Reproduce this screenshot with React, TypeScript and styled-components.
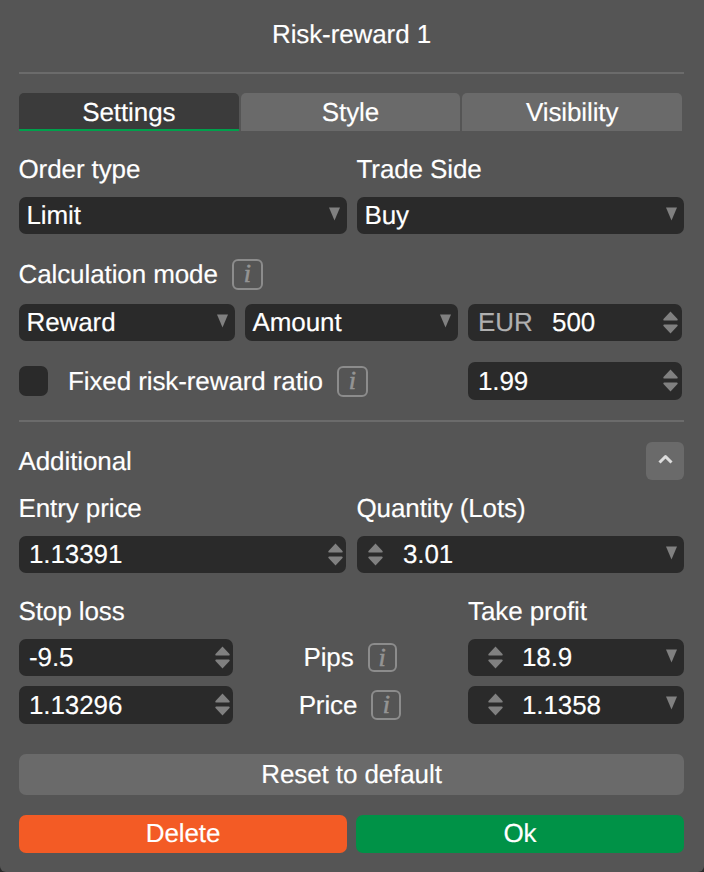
import styled, { createGlobalStyle } from 'styled-components';

const GlobalStyle = createGlobalStyle`
  html, body {
    margin: 0;
    padding: 0;
    background: #2b2b2b;
  }
  * {
    box-sizing: border-box;
  }
`;

const Panel = styled.div`
  width: 704px;
  height: 872px;
  padding: 0 20px 0 19px;
  background: #555555;
  border-radius: 0 0 6px 6px;
  color: #ffffff;
  font-family: 'Liberation Sans', Arial, sans-serif;
  font-size: 26px;
  letter-spacing: -0.1px;
  text-rendering: geometricPrecision;
  -webkit-text-stroke: 0.15px currentColor;
  overflow: hidden;
`;

const Title = styled.div`
  height: 72px;
  padding-bottom: 4px;
  display: flex;
  align-items: center;
  justify-content: center;
`;

const Divider = styled.div<{ $top?: number; $bottom: number }>`
  height: 2px;
  background: #6b6b6b;
  margin-top: ${(props) => props.$top ?? 0}px;
  margin-bottom: ${(props) => props.$bottom}px;
`;

const Tabs = styled.div`
  display: flex;
  gap: 2px;
  width: 663px;
  height: 38px;
`;

const Tab = styled.div<{ $active?: boolean }>`
  flex: 1;
  display: flex;
  align-items: center;
  justify-content: center;
  border-radius: 5px 5px 0 0;
  background: ${(props) => (props.$active ? '#3b3b3b' : '#6a6a6a')};
  box-shadow: ${(props) => (props.$active ? 'inset 0 -2px 0 #00a04c' : 'none')};
`;

const Columns = styled.div`
  display: grid;
  grid-template-columns: 328px 327px;
  column-gap: 10px;
`;

const Label = styled.div<{ $height: number; $pad?: number }>`
  height: ${(props) => props.$height}px;
  padding-top: ${(props) => props.$pad ?? 0}px;
  margin-left: -0.5px;
  display: flex;
  align-items: center;
  gap: 14px;
`;

const Field = styled.div<{ $width?: number; $height?: number; $push?: boolean }>`
  width: ${(props) => (props.$width ? `${props.$width}px` : 'auto')};
  height: ${(props) => props.$height ?? 37}px;
  margin-left: ${(props) => (props.$push ? 'auto' : '0')};
  border-radius: 7px;
  background: #2a2a2a;
  display: flex;
  align-items: center;
  position: relative;
  padding-left: 7.5px;
  flex-shrink: 0;
`;

const Value = styled.span<{ $left?: number }>`
  margin-left: ${(props) => props.$left ?? 0}px;
`;

const Unit = styled.span`
  color: #b0b0b0;
  margin-right: 19.5px;
  margin-left: 2.5px;
`;

const Caret = styled.svg`
  position: absolute;
  right: 7px;
  top: 10px;
  width: 11px;
  height: 14px;
`;

const Stepper = styled.svg<{ $left?: number; $right?: number }>`
  position: absolute;
  ${(props) => (props.$left ? `left: ${props.$left}px;` : `right: ${props.$right ?? 3}px;`)}
  top: 7px;
  width: 15px;
  height: 23px;
`;

const Row = styled.div<{ $height?: number; $top?: number }>`
  display: flex;
  align-items: center;
  gap: 10px;
  height: ${(props) => props.$height ?? 37}px;
  margin-top: ${(props) => props.$top ?? 0}px;
`;

const FixedRow = styled(Row)`
  gap: 0;
  padding-right: 2px;
`;

const InfoBox = styled.span<{ $size: number }>`
  width: ${(props) => props.$size}px;
  height: ${(props) => props.$size}px;
  flex-shrink: 0;
  border: 2px solid #8c8c8c;
  border-radius: 6px;
  display: flex;
  align-items: center;
  justify-content: center;
  color: #949494;
  font-family: 'Liberation Serif', 'Times New Roman', serif;
  font-style: italic;
  font-size: 26px;
  letter-spacing: 0;
  -webkit-text-stroke: 0.6px #949494;
`;

const CheckBox = styled.span`
  width: 29px;
  height: 30px;
  border-radius: 7px;
  background: #2a2a2a;
  margin-right: 20px;
  flex-shrink: 0;
`;

const FixedLabel = styled.span`
  margin-right: 14px;
`;

const Collapse = styled.div`
  width: 38px;
  height: 38px;
  padding-bottom: 4px;
  border-radius: 6px;
  background: #6a6a6a;
  margin-left: auto;
  display: flex;
  align-items: center;
  justify-content: center;
`;

const StopHeader = styled.div`
  display: flex;
  justify-content: space-between;
`;

const TakeProfitLabel = styled(Label)`
  width: 216px;
`;

const StopGrid = styled.div`
  display: grid;
  grid-template-columns: 214px 235px 216px;
  row-gap: 10px;
`;

const CenterCell = styled.div`
  display: flex;
  align-items: center;
  justify-content: center;
  gap: 14px;
  padding-right: 1px;
`;

const ResetButton = styled.div`
  height: 41px;
  margin-top: 30px;
  border-radius: 7px;
  background: #6a6a6a;
  display: flex;
  align-items: center;
  justify-content: center;
`;

const ActionRow = styled.div`
  display: grid;
  grid-template-columns: 328px 328px;
  column-gap: 9px;
  margin-top: 20px;
`;

const ActionButton = styled.div<{ $color: string }>`
  height: 38px;
  padding-bottom: 1px;
  border-radius: 7px;
  background: ${(props) => props.$color};
  display: flex;
  align-items: center;
  justify-content: center;
`;

const DownCaret = () => (
  <Caret viewBox="0 0 11 14">
    <path d="M0 0.5h11L5.5 13.5z" fill="#808080" />
  </Caret>
);

const Steps = ({ left, right }: { left?: number; right?: number }) => (
  <Stepper $left={left} $right={right} viewBox="0 0 15 23">
    <path d="M7.5 .5l7 7.4a1 1 0 0 1-.7 1.6H1.2a1 1 0 0 1-.7-1.6z" fill="#808080" />
    <path d="M7.5 22.5l-7-7.4a1 1 0 0 1 .7-1.6h12.6a1 1 0 0 1 .7 1.6z" fill="#808080" />
  </Stepper>
);

const Info = ({ size = 30 }: { size?: number }) => <InfoBox $size={size}>i</InfoBox>;

function App() {
  return (
    <Panel>
      <GlobalStyle />
      <Title>Risk-reward 1</Title>
      <Divider $bottom={19} />
      <Tabs>
        <Tab $active>Settings</Tab>
        <Tab>Style</Tab>
        <Tab>Visibility</Tab>
      </Tabs>

      <Columns>
        <Label $height={66} $pad={10}>Order type</Label>
        <Label $height={66} $pad={10}>Trade Side</Label>
        <Field>
          Limit
          <DownCaret />
        </Field>
        <Field>
          Buy
          <DownCaret />
        </Field>
      </Columns>

      <Label $height={70} $pad={10}>
        Calculation mode
        <Info size={31} />
      </Label>
      <Row>
        <Field $width={216}>
          Reward
          <DownCaret />
        </Field>
        <Field $width={213}>
          Amount
          <DownCaret />
        </Field>
        <Field $width={214}>
          <Unit>EUR</Unit>
          500
          <Steps right={4} />
        </Field>
      </Row>
      <FixedRow $height={38} $top={21}>
        <CheckBox />
        <FixedLabel>Fixed risk-reward ratio</FixedLabel>
        <Info size={31} />
        <Field $width={214} $height={38} $push>
          <Value $left={2.5}>1.99</Value>
          <Steps right={4} />
        </Field>
      </FixedRow>

      <Divider $top={20} $bottom={20} />
      <Row $height={38}>
        <Label $height={38}>Additional</Label>
        <Collapse>
          <svg width="15" height="10" viewBox="0 0 15 10">
            <path d="M1.5 8.5L7.5 2.5l6 6" fill="none" stroke="#dcdcdc" strokeWidth="3" strokeLinejoin="round" />
          </svg>
        </Collapse>
      </Row>

      <Columns>
        <Label $height={56}>Entry price</Label>
        <Label $height={56}>Quantity (Lots)</Label>
        <Field $width={327}>
          <Value $left={2.5}>1.13391</Value>
          <Steps />
        </Field>
        <Field>
          <Value $left={38.5}>3.01</Value>
          <Steps left={11} />
          <DownCaret />
        </Field>
      </Columns>

      <StopHeader>
        <Label $height={66} $pad={10}>Stop loss</Label>
        <TakeProfitLabel $height={66} $pad={10}>Take profit</TakeProfitLabel>
      </StopHeader>
      <StopGrid>
        <Field>
          <Value $left={2.5}>-9.5</Value>
          <Steps />
        </Field>
        <CenterCell>
          Pips
          <Info size={29} />
        </CenterCell>
        <Field>
          <Value $left={46.5}>18.9</Value>
          <Steps left={20} />
          <DownCaret />
        </Field>
        <Field $height={38}>
          <Value $left={2.5}>1.13296</Value>
          <Steps />
        </Field>
        <CenterCell>
          Price
          <Info size={30} />
        </CenterCell>
        <Field $height={38}>
          <Value $left={46.5}>1.1358</Value>
          <Steps left={20} />
          <DownCaret />
        </Field>
      </StopGrid>

      <ResetButton>Reset to default</ResetButton>
      <ActionRow>
        <ActionButton $color="#f35b25">Delete</ActionButton>
        <ActionButton $color="#009247">Ok</ActionButton>
      </ActionRow>
    </Panel>
  );
}

export default App;
